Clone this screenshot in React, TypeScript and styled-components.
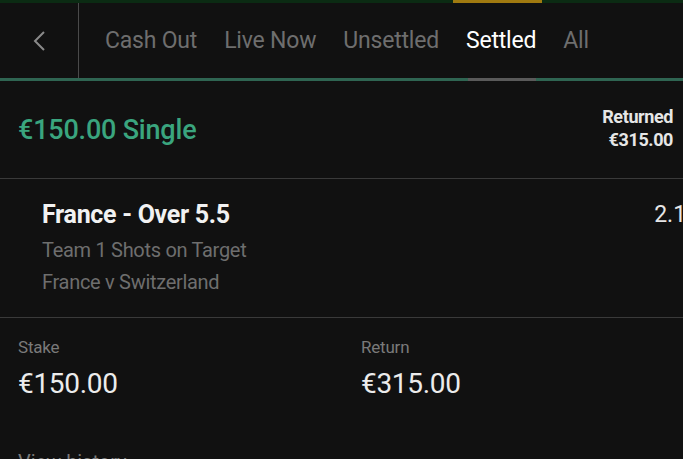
import styled, { createGlobalStyle } from "styled-components";

const GlobalStyle = createGlobalStyle`
  html, body {
    margin: 0;
    padding: 0;
    background: #111111;
    font-family: Roboto, "Liberation Sans", sans-serif;
    overflow: hidden;
  }
`;

const tabs = ["Cash Out", "Live Now", "Unsettled", "Settled", "All"];
const ACTIVE_TAB = "Settled";

export default function App() {
  return (
    <Page>
      <GlobalStyle />
      <TopStrip>
        <StripMark />
      </TopStrip>

      <TabBar>
        <BackButton>
          <svg width="14" height="22" viewBox="0 0 14 22">
            <path d="M12 2 L3 11 L12 20" fill="none" stroke="#8a8a8a" strokeWidth="2" />
          </svg>
        </BackButton>
        <TabList>
          {tabs.map((t) => (
            <Tab key={t} $active={t === ACTIVE_TAB}>
              {t}
            </Tab>
          ))}
        </TabList>
      </TabBar>

      <BetHeader>
        <BetTitle>€150.00 Single</BetTitle>
        <ReturnedBox>
          <span>Returned</span>
          <span>€315.00</span>
        </ReturnedBox>
      </BetHeader>

      <Selection>
        <SelectionInfo>
          <SelectionName>France - Over 5.5</SelectionName>
          <SelectionMeta>Team 1 Shots on Target</SelectionMeta>
          <SelectionMeta>France v Switzerland</SelectionMeta>
        </SelectionInfo>
        <Odds>2.10</Odds>
      </Selection>

      <Totals>
        <TotalCol>
          <TotalLabel>Stake</TotalLabel>
          <TotalValue>€150.00</TotalValue>
        </TotalCol>
        <TotalCol>
          <TotalLabel>Return</TotalLabel>
          <TotalValue>€315.00</TotalValue>
        </TotalCol>
      </Totals>

      <HistoryLink>View history</HistoryLink>
    </Page>
  );
}

const Page = styled.div`
  width: 683px;
  height: 459px;
  background: #111111;
  overflow: hidden;
  color: #ffffff;
`;

const TopStrip = styled.div`
  height: 3px;
  background: #0b2b13;
  position: relative;
`;

const StripMark = styled.div`
  position: absolute;
  left: 453px;
  width: 89px;
  top: 0;
  bottom: 0;
  background: #a07a10;
`;

const TabBar = styled.div`
  display: flex;
  height: 75px;
  border-bottom: 3px solid #2f6552;
`;

const BackButton = styled.div`
  width: 79px;
  flex: none;
  display: flex;
  align-items: center;
  justify-content: center;
  border-right: 1px solid #4a4a4a;
  box-sizing: border-box;
`;

const TabList = styled.div`
  display: flex;
  align-items: center;
  gap: 27px;
  padding-left: 26px;
`;

const Tab = styled.div<{ $active?: boolean }>`
  position: relative;
  font-size: 23px;
  color: ${(p) => (p.$active ? "#ffffff" : "#6e6e6e")};
  height: 100%;
  display: flex;
  align-items: center;
  letter-spacing: -0.2px;

  &::after {
    content: "";
    display: ${(p) => (p.$active ? "block" : "none")};
    position: absolute;
    left: 2px;
    right: 0;
    bottom: -3px;
    height: 3px;
    background: #5a5a5a;
  }
`;

const BetHeader = styled.div`
  display: flex;
  align-items: center;
  justify-content: space-between;
  height: 97px;
  padding: 0 10px 0 18px;
  border-bottom: 1px solid #3a3a3a;
`;

const BetTitle = styled.div`
  font-size: 27px;
  font-weight: 500;
  color: #3aa57e;
  letter-spacing: -0.2px;
`;

const ReturnedBox = styled.div`
  display: flex;
  flex-direction: column;
  align-items: flex-end;
  font-size: 18px;
  font-weight: 700;
  color: #e6e6e6;
  line-height: 23px;
  letter-spacing: -0.4px;
  margin-top: -3px;
`;

const Selection = styled.div`
  display: flex;
  justify-content: space-between;
  align-items: flex-start;
  height: 139px;
  padding: 21px 0 0 42px;
  box-sizing: border-box;
  border-bottom: 1px solid #3a3a3a;
`;

const SelectionInfo = styled.div`
  display: flex;
  flex-direction: column;
`;

const SelectionName = styled.div`
  font-size: 25px;
  font-weight: 700;
  color: #f2f2f2;
  line-height: 30px;
  margin-bottom: 4px;
  letter-spacing: -0.3px;
`;

const SelectionMeta = styled.div`
  font-size: 20px;
  color: #6e6e6e;
  line-height: 32px;
  letter-spacing: -0.3px;
`;

const Odds = styled.div`
  font-size: 23px;
  color: #e6e6e6;
  line-height: 30px;
  margin-right: -16px;
  flex: none;
`;

const Totals = styled.div`
  display: grid;
  grid-template-columns: 343px 1fr;
  padding: 19px 18px 0;
`;

const TotalCol = styled.div`
  display: flex;
  flex-direction: column;
`;

const TotalLabel = styled.div`
  font-size: 17px;
  color: #7a7a7a;
  line-height: 20px;
  margin-bottom: 9px;
  letter-spacing: -0.2px;
`;

const TotalValue = styled.div`
  font-size: 28px;
  color: #ececec;
  line-height: 36px;
  letter-spacing: -0.3px;
`;

const HistoryLink = styled.div`
  padding: 48px 18px 0;
  font-size: 20px;
  color: #7a7a7a;
`;
